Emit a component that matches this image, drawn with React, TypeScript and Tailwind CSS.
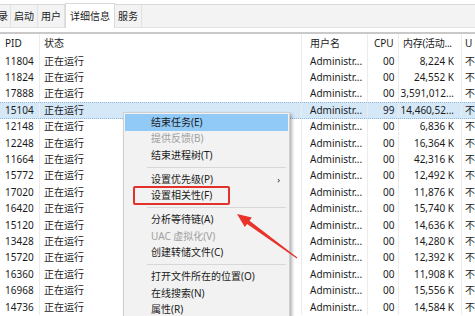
import React from 'react';

type Row = { pid: string; cpu: string; mem: string };

const rows: Row[] = [
  { pid: '11804', cpu: '00', mem: '8,224 K' },
  { pid: '11824', cpu: '00', mem: '24,552 K' },
  { pid: '17888', cpu: '00', mem: '3,591,012...' },
  { pid: '15104', cpu: '99', mem: '14,460,52...' },
  { pid: '12148', cpu: '00', mem: '6,836 K' },
  { pid: '12248', cpu: '00', mem: '16,364 K' },
  { pid: '11664', cpu: '00', mem: '42,316 K' },
  { pid: '15772', cpu: '00', mem: '12,492 K' },
  { pid: '17020', cpu: '00', mem: '11,876 K' },
  { pid: '16420', cpu: '00', mem: '15,740 K' },
  { pid: '15120', cpu: '00', mem: '14,636 K' },
  { pid: '13428', cpu: '00', mem: '14,280 K' },
  { pid: '15720', cpu: '00', mem: '12,392 K' },
  { pid: '16360', cpu: '00', mem: '11,908 K' },
  { pid: '16968', cpu: '00', mem: '15,556 K' },
  { pid: '14736', cpu: '00', mem: '14,584 K' },
];

type MenuItem = { label: string; disabled?: boolean; active?: boolean; sub?: boolean } | 'sep';

const menu: MenuItem[] = [
  { label: '结束任务(E)', active: true },
  { label: '提供反馈(B)', disabled: true },
  { label: '结束进程树(T)' },
  'sep',
  { label: '设置优先级(P)', sub: true },
  { label: '设置相关性(F)' },
  'sep',
  { label: '分析等待链(A)' },
  { label: 'UAC 虚拟化(V)', disabled: true },
  { label: '创建转储文件(C)' },
  'sep',
  { label: '打开文件所在的位置(O)' },
  { label: '在线搜索(N)' },
  { label: '属性(R)' },
];

const cols = 'grid grid-cols-[40px_262px_66px_31px_63px_1fr]';
const cell = 'border-r border-[#ececec] overflow-hidden whitespace-nowrap';

export default function App() {
  return (
    <div className="relative w-[475px] h-[316px] overflow-hidden bg-white text-[10px] text-[#1b1b1b] font-['Noto_Sans','Noto_Sans_CJK_SC',sans-serif]">
      {/* top strip */}
      <div className="h-[5px] border-b border-[#d9d9d9] bg-white" />

      {/* tabs */}
      <div className="flex h-[23px] items-end bg-[#f3f3f3] border-b border-[#e3e3e3]">
        <div className="h-full flex items-center -ml-[2px] pr-[2px] border-r border-[#e0e0e0]">录</div>
        <div className="h-full flex items-center px-[3px] border-r border-[#e0e0e0]">启动</div>
        <div className="h-full flex items-center px-[3px] border-r border-[#e0e0e0]">用户</div>
        <div className="h-[25px] -mb-[1px] flex items-center px-[4px] bg-white border-x border-t border-[#d9d9d9]">详细信息</div>
        <div className="h-full flex items-center px-[3px] border-r border-[#e0e0e0]">服务</div>
      </div>

      <div className="h-[4px] bg-white" />
      <div className="h-[2px] bg-[#c9c9c9]" />

      {/* header */}
      <div className={`${cols} h-[19px] items-stretch`}>
        <div className={`${cell} pl-[5px] flex items-center`}>PID</div>
        <div className={`${cell} pl-[4px] flex items-center`}>状态</div>
        <div className={`${cell} pl-[8px] flex items-center`}>用户名</div>
        <div className={`${cell} pl-[6px] flex items-center`}>CPU</div>
        <div className={`${cell} pl-[4px] flex items-center tracking-[-0.3px]`}>内存(活动...</div>
        <div className="pl-[3px] flex items-center overflow-hidden">U</div>
      </div>

      {/* rows */}
      {rows.map((r, i) => {
        const sel = i === 3;
        return (
          <div
            key={r.pid}
            className={`${cols} h-[16.4px] ${sel ? 'bg-[#d5e8f8] border-y border-dotted border-[#8fb8dc]' : ''}`}
          >
            <div className={`${cell} pl-[5px] flex items-center`}>{r.pid}</div>
            <div className={`${cell} pl-[4px] flex items-center`}>正在运行</div>
            <div className={`${cell} pl-[8px] flex items-center`}>Administr...</div>
            <div className={`${cell} pl-[15px] flex items-center`}>{r.cpu}</div>
            <div className={`${cell} pr-[7px] flex items-center justify-end`}>{r.mem}</div>
            <div className="pl-[3px] flex items-center overflow-hidden">不</div>
          </div>
        );
      })}

      {/* context menu */}
      <div className="absolute left-[123px] top-[112px] w-[167px] h-[220px] bg-[#f2f2f2] border border-[#cfcfcf] shadow-[2px_2px_3px_rgba(0,0,0,0.3)] pt-[1px] px-[1px]">
        {menu.map((m, i) =>
          m === 'sep' ? (
            <div key={i} className="h-[7.5px] flex items-center pl-[22px] pr-[2px]">
              <div className="h-px w-full bg-[#d7d7d7]" />
            </div>
          ) : (
            <div
              key={i}
              className={`relative h-[16.5px] flex items-center pl-[26px] ${m.active ? 'bg-[#91c9f7]' : ''} ${
                m.disabled ? 'text-[#a0a0a0]' : 'text-[#1b1b1b]'
              }`}
            >
              {m.label}
              {m.sub && <span className="absolute right-[8px] text-[9px]">›</span>}
            </div>
          )
        )}
      </div>

      {/* highlight box */}
      <div className="absolute left-[133px] top-[186px] w-[97px] h-[19px] border-2 border-[#e2312b] rounded-[2px]" />

      {/* arrow */}
      <svg className="absolute left-0 top-0" width="475" height="316" viewBox="0 0 475 316">
        <polygon
          fill="#e8322a"
          points="237,214 251.8,217.5 249.5,220.7 297.3,257.6 296.7,258.4 247.1,223.9 244.8,227.1"
        />
      </svg>
    </div>
  );
}
